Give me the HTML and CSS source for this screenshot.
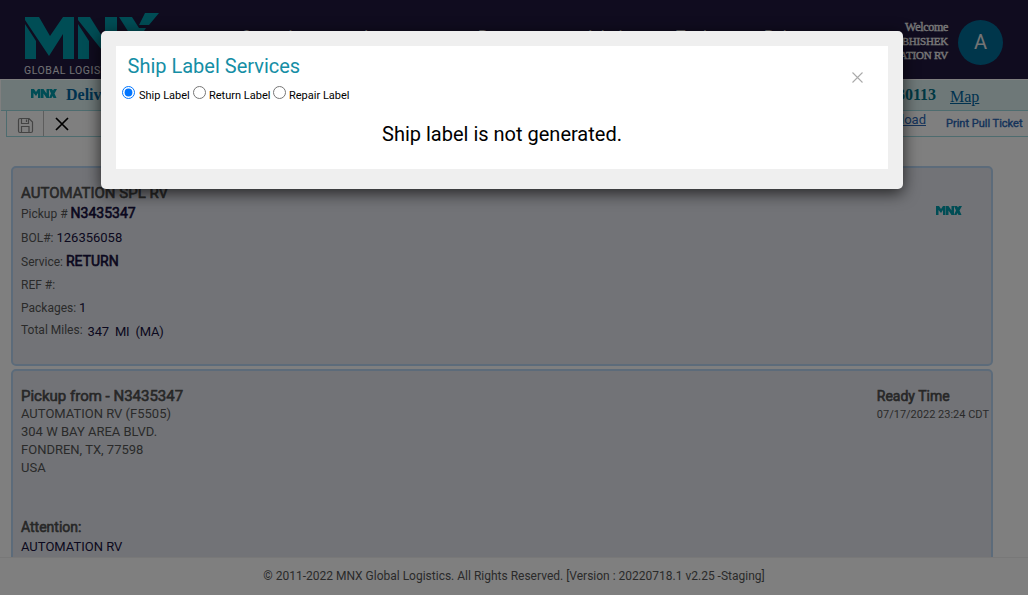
FILE: index.html
```html
<!DOCTYPE html>
<html lang="en">
<head>
<meta charset="utf-8">
<title>MNX Global Logistics</title>
<link rel="stylesheet" href="styles.css">
</head>
<body>
<svg class="defs" width="0" height="0" aria-hidden="true">
  <symbol id="mnx" viewBox="0 0 134 47">
    <path d="M0 4H14L25 23 38 4H49V46H38V21L24 43 0 7ZM0 11 11 28V46H0ZM53 4H65L80 28V4H92V46H84L53 7ZM53 11 64 28V46H53ZM94 4H107L114 15H121L101 46H88L106 23ZM120 0H134L124 12H114ZM110 28 118 18 133 46H119Z"/>
  </symbol>
  <symbol id="mnx-small" viewBox="0 0 26 9">
    <path d="M0 0H3L5 3 7 0H9.500V9H7V4L5 7 2.500 4V9H0ZM10 0H12.500L15.500 4.500V0H18V9H15.500L12.500 4.500V9H10ZM18 0H21L22 1.500 23 0H26L23.500 4.500 25.500 9H22.500L21.500 7 20.500 9H18L20 4.500Z"/>
  </symbol>
</svg>
<div class="page">
  <header class="header">
    <div class="brand">
      <svg class="brand-logo"><use href="#mnx"/></svg>
      <span class="brand-text">GLOBAL LOGISTICS</span>
    </div>
    <nav class="nav">
      <span class="nav-item operations">Operations</span><span class="nav-item inventory">Inventory</span><span class="nav-item reports">Reports</span><span class="nav-item admin">Admin</span><span class="nav-item tools">Tools</span><span class="nav-item">Rules</span>
    </nav>
    <div class="user"><span class="welcome">Welcome</span><br>ABHISHEK<br>AUTOMATION RV</div>
    <div class="avatar">A</div>
  </header>
  <div class="titlebar">
    <svg class="mini-logo"><use href="#mnx-small"/></svg>
    <b class="title">Delivery</b>
    <b class="order">30113</b>
    <a class="map">Map</a>
  </div>
  <div class="toolbar">
    <div class="tool save"><svg width="17" height="17" viewBox="0 0 17 17"><path d="M1.500 3Q1.500 1.500 3 1.500H12L15.500 5V14Q15.500 15.500 14 15.500H3Q1.500 15.500 1.500 14ZM4.500 1.500V6.500H11.500V1.500M9.500 2.500V5M4.500 15.500V9.500H12V15.500"/></svg></div>
    <div class="tool close"><svg width="14" height="14" viewBox="0 0 14 14"><path d="M1 1 13 13M13 1 1 13"/></svg></div>
    <a class="upload">Upload</a>
    <b class="ticket">Print Pull Ticket</b>
  </div>
  <main class="content">
    <section class="card summary">
      <div>
        <h2>AUTOMATION SPL RV</h2>
        <p class="r1">Pickup # <b>N3435347</b></p>
        <p class="r2">BOL#: <span class="val">126356058</span></p>
        <p class="r3">Service: <b>RETURN</b></p>
        <p class="r4">REF #:</p>
        <p class="r5">Packages: <span class="val">1</span></p>
        <p class="r6"><span>Total Miles:</span><span class="val miles">347&nbsp; MI&nbsp; (MA)</span></p>
      </div>
      <svg class="card-logo"><use href="#mnx-small"/></svg>
    </section>
    <section class="card pickup">
      <div>
        <h2>Pickup from - N3435347</h2>
        <address>AUTOMATION RV (F5505)<br>304 W BAY AREA BLVD.<br>FONDREN, TX, 77598<br>USA</address>
        <h3>Attention:</h3>
        <div class="val contact">AUTOMATION RV</div>
      </div>
      <div class="ready">
        <h3>Ready Time</h3>
        <div>07/17/2022 23:24 CDT</div>
      </div>
    </section>
  </main>
  <footer class="footer">© 2011-2022 MNX Global Logistics. All Rights Reserved. [Version : 20220718.1 v2.25 -Staging]</footer>
</div>
<div class="overlay">
  <div class="modal" role="dialog">
    <div class="modal-body">
      <div class="modal-head">
        <h1>Ship Label Services</h1>
        <svg class="dismiss" width="11" height="11" viewBox="0 0 11 11"><path d="M.5 .5 10.500 10.500M10.500 .5 .5 10.500"/></svg>
      </div>
      <div class="options">
        <label><input type="radio" name="label" checked><span>Ship Label</span></label>
        <label><input type="radio" name="label"><span>Return Label</span></label>
        <label><input type="radio" name="label"><span>Repair Label</span></label>
      </div>
      <p class="message">Ship label is not generated.</p>
    </div>
  </div>
</div>
</body>
</html>
```
FILE: styles.css
```css
* { box-sizing: border-box; }
body { margin: 0; font-family: Roboto, sans-serif; overflow: hidden; }
h1, h2, h3, p { margin: 0; }
.defs { position: absolute; }
.page { height: 595px; display: flex; flex-direction: column; background: #fff; overflow: hidden; }
.header { height: 79px; flex: none; display: flex; background: #20183f; }
.brand { width: 218px; padding: 13px 0 0 25px; display: flex; flex-direction: column; }
.brand-logo { width: 134px; height: 47px; fill: #009aaa; }
.brand-text { color: #e2e2e6; font: 10.5px/12px Roboto, sans-serif; letter-spacing: .55px; margin: 5px 0 0 -1px; white-space: nowrap; }
.nav { display: flex; flex: 1; padding: 27px 0 0 23px; font-size: 16px; line-height: 20px; color: #ccc; }
.nav-item { flex: none; }
.operations { width: 123px; }
.inventory { width: 114px; }
.reports { width: 107px; }
.admin { width: 91px; }
.tools { width: 88px; }
.user { flex: none; width: 118px; padding-top: 20px; text-align: right; color: #eee; font: 11px/14px "Liberation Serif", serif; letter-spacing: -.2px; -webkit-text-stroke: .4px #eee; }
.welcome { font-size: 12px; letter-spacing: -.3px; }
.avatar { flex: none; width: 45px; height: 45px; margin: 20px 25px 0 10px; border-radius: 50%; background: #006c97; color: #e8e8e8; font-size: 20px; line-height: 45px; text-align: center; }
.titlebar { flex: none; height: 32px; margin: 0 0 0 1px; border-top: 1px solid #fff; border-bottom: 1px solid #9cd8df; background: #ddf1f1; display: flex; font: 16px/30px "Liberation Serif", serif; color: #00659f; }
.mini-logo { width: 26px; height: 9px; margin: 9px 9px 0 30px; fill: #009aaa; }
.title { flex: 1; }
.order { width: 53px; color: #007087; }
.map { width: 78px; text-decoration: underline; line-height: 34px; }
.toolbar { flex: none; height: 26px; margin-left: 6px; border: 1px solid #9cd8df; border-width: 0 0 1px 1px; display: flex; font-size: 13px; color: #2a66b4; }
.tool { width: 37px; border-right: 1px solid #bbb; padding: 6px 0 0 10px; }
.tool svg { fill: none; stroke: #888; stroke-width: 1.2; display: block; }
.close { border: 0; padding: 6px 0 0 11px; flex: 1; }
.tool.close svg { stroke: #000; stroke-width: 1.7; }
.upload { text-decoration: underline; line-height: 17px; margin-right: 20px; }
.ticket { font-size: 11px; line-height: 25px; font-weight: 400; width: 82px; white-space: nowrap; -webkit-text-stroke: .4px #2a66b4; }
.content { flex: 1; min-height: 0; overflow: hidden; padding: 29px 35px 0 11px; }
.card { border: 2px solid #b8d7f5; border-radius: 5px; background: #e4e7ee; padding: 16px 2px 0 8px; display: flex; justify-content: space-between; color: #555; font-size: 12px; }
.summary { height: 200px; margin-bottom: 3px; }
.pickup { height: 260px; }
.card h2 { font-size: 15px; line-height: 18px; font-weight: 400; color: #4f4f4f; -webkit-text-stroke: .6px #4f4f4f; }
.card p { height: 23px; line-height: 22px; }
.card p b { font-size: 14px; font-weight: 400; color: #16103d; -webkit-text-stroke: .6px #16103d; }
.val { color: #16103d; font-size: 13px; }
.card .r1 { height: 25px; }
.card .r2 { height: 23px; }
.card .r3 { height: 23px; }
.card .r4 { height: 24px; line-height: 24px; }
.card .r6 { display: flex; gap: 5px; line-height: 21px; }
.miles { line-height: 24px; letter-spacing: -.2px; }
.card-logo { width: 26px; height: 9px; margin: 22px 27.500px 0 0; fill: #009aaa; }
address { font: 13px/18px Roboto, sans-serif; margin-bottom: 41px; }
.card h3 { font-size: 14px; line-height: 19px; font-weight: 400; color: #4f4f4f; -webkit-text-stroke: .6px #4f4f4f; }
.contact { line-height: 20px; }
.ready { font-size: 11px; line-height: 17px; }
.footer { flex: none; height: 38px; border-top: 1px solid #f0f0f0; color: #555; font-size: 12px; line-height: 36px; text-align: center; }
.overlay { position: absolute; inset: 0; background: rgba(0,0,0,.5); }
.modal { margin: 31px 0 0 101px; width: 802px; height: 158px; padding: 15px; border-radius: 5px; background: #efefef; box-shadow: 0 4px 16px rgba(0,0,0,.7); }
.modal-body { height: 123px; background: #fff; }
.modal-head { display: flex; justify-content: space-between; padding: 8px 25px 0 11.500px; height: 40px; }
.modal-head h1 { font-size: 20px; line-height: 24px; font-weight: 400; color: #158ea5; }
.dismiss { margin-top: 18px; fill: none; stroke: #aaa; stroke-width: 1.1; }
.options { display: flex; padding-left: 6px; font-size: 11px; height: 26px; }
.options label { display: flex; width: 71px; white-space: nowrap; }
.options label + label { width: 80px; }
.options input { width: 13px; height: 13px; margin: 0 4px 0 0; flex: none; }
.options label + label input { margin-right: 3px; }
.options span { line-height: 20px; }
.message { text-align: center; font-size: 20px; line-height: 24px; margin-top: 10px; color: #000; }
```
